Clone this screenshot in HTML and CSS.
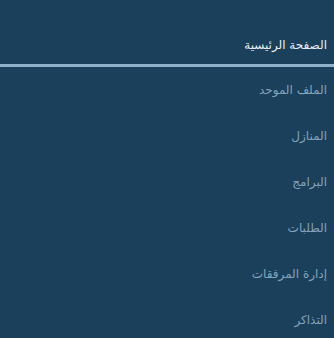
FILE: index.html
```html
<!DOCTYPE html>
<html lang="ar" dir="rtl">
<head>
<meta charset="utf-8">
<link rel="stylesheet" href="styles.css">
</head>
<body>
<nav class="menu">
  <div class="item home">الصفحة الرئيسية</div>
  <div class="divider"></div>
  <div class="item">الملف الموحد</div>
  <div class="item">المنازل</div>
  <div class="item">البرامج</div>
  <div class="item">الطلبات</div>
  <div class="item">إدارة المرفقات</div>
  <div class="item">التذاكر</div>
</nav>
</body>
</html>
```
FILE: styles.css
```css
html, body {
  margin: 0;
  padding: 0;
  background: #1a405c;
  height: 100%;
  overflow: hidden;
}
.menu {
  display: flex;
  flex-direction: column;
  font-family: "DejaVu Sans", sans-serif;
  font-size: 12px;
}
.item {
  height: 46px;
  display: flex;
  align-items: center;
  padding-right: 7px;
  color: #85a2b8;
}
.home {
  height: 64px;
  box-sizing: border-box;
  align-items: flex-end;
  padding-bottom: 12px;
  color: #e6eef3;
}
.divider {
  height: 3px;
  background: #8fb2ca;
}
```
